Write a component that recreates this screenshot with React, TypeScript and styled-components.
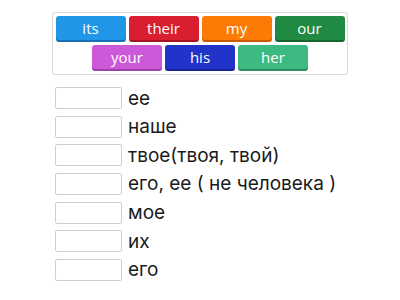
import styled, { createGlobalStyle } from "styled-components";

const Global = createGlobalStyle`
  html, body {
    margin: 0;
    padding: 0;
    background: #fff;
  }
  body {
    font-family: Inter, Roboto, "Liberation Sans", sans-serif;
  }
`;

const Page = styled.div`
  width: 400px;
  height: 300px;
  padding-top: 12px;
  box-sizing: border-box;
  display: flex;
  flex-direction: column;
  align-items: center;
`;

const Bank = styled.div`
  width: 296px;
  box-sizing: border-box;
  border: 1px solid #d9d9d9;
  border-radius: 3px;
  padding: 3px 2px;
  display: flex;
  flex-wrap: wrap;
  justify-content: center;
  gap: 3px;
`;

const Tile = styled.div<{ $bg: string; $edge: string }>`
  width: 70px;
  height: 24px;
  margin-bottom: 2px;
  border-radius: 3px;
  background: ${(p) => p.$bg};
  box-shadow: 0 2px 0 ${(p) => p.$edge};
  color: #fff;
  font-family: "Open Sans", Roboto, sans-serif;
  font-size: 15px;
  display: flex;
  align-items: center;
  justify-content: center;
`;

const List = styled.div`
  margin-top: 12px;
  width: 290px;
  display: flex;
  flex-direction: column;
  gap: 6.67px;
`;

const Row = styled.div`
  display: flex;
  align-items: center;
  gap: 6px;
  height: 22px;
`;

const Slot = styled.div`
  width: 67px;
  height: 22px;
  box-sizing: border-box;
  border: 1px solid #cfcfcf;
  border-radius: 2px;
  background: #fff;
`;

const Label = styled.span`
  font-size: 19px;
  color: #1a1a1a;
  white-space: nowrap;
`;

const TILES = [
  { text: "its", bg: "#2196e6", edge: "#1770b5" },
  { text: "their", bg: "#d81e2f", edge: "#a51522" },
  { text: "my", bg: "#fd7a06", edge: "#c85d00" },
  { text: "our", bg: "#218a42", edge: "#176630" },
  { text: "your", bg: "#cb59d8", edge: "#9c3fa8" },
  { text: "his", bg: "#2133c9", edge: "#17249a" },
  { text: "her", bg: "#3db982", edge: "#2c8d62" },
];

const ROWS = [
  "ее",
  "наше",
  "твое(твоя, твой)",
  "его, ее ( не человека )",
  "мое",
  "их",
  "его",
];

export default function App() {
  return (
    <>
      <Global />
      <Page>
        <Bank>
          {TILES.map((t) => (
            <Tile key={t.text} $bg={t.bg} $edge={t.edge}>
              {t.text}
            </Tile>
          ))}
        </Bank>
        <List>
          {ROWS.map((r, i) => (
            <Row key={i}>
              <Slot />
              <Label>{r}</Label>
            </Row>
          ))}
        </List>
      </Page>
    </>
  );
}
